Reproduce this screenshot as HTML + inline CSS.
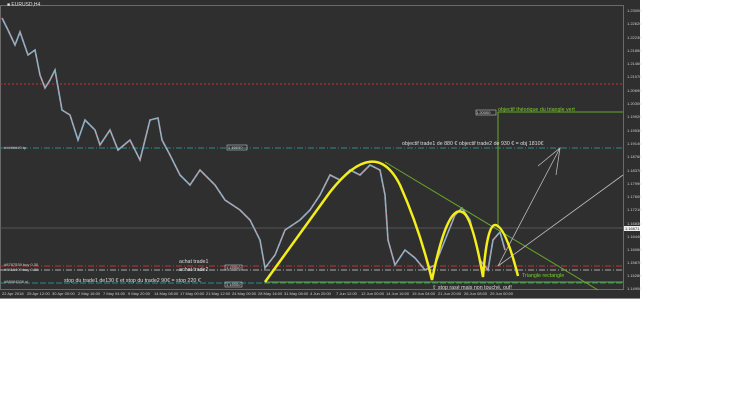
<!DOCTYPE html><html><head><style>body{margin:0;width:749px;height:402px;background:#fff;overflow:hidden;font-family:"Liberation Sans",sans-serif}</style></head><body>
<svg width="749" height="402" style="position:absolute;left:0;top:0" font-family="Liberation Sans, sans-serif">
<rect x="0" y="0" width="640" height="299" fill="#2f2f2f"/>
<rect x="0.5" y="5.5" width="623" height="284" fill="none" stroke="#6a6a6a"/>
<rect x="0" y="298" width="640" height="1" fill="#888"/>
<text x="7" y="6" font-size="5" fill="#ddd">■ EURUSD,H4</text>
<line x1="0" y1="84" x2="623" y2="84" stroke="#c03030" stroke-dasharray="2,2"/>
<line x1="0" y1="148" x2="623" y2="148" stroke="#2a8a8a" stroke-dasharray="6,2,1,2"/>
<text x="4" y="149" font-size="4" fill="#ccc">#######0 tp</text>
<line x1="0" y1="228" x2="623" y2="228" stroke="#555"/>
<line x1="0" y1="266" x2="623" y2="266" stroke="#c03030" stroke-dasharray="6,2,1,2"/>
<line x1="0" y1="270" x2="623" y2="270" stroke="#aaa" stroke-dasharray="6,2,1,2"/>
<line x1="0" y1="283" x2="623" y2="283" stroke="#2a8a8a" stroke-dasharray="6,2"/>
<text x="4" y="266" font-size="4" fill="#ccc">#8787539 buy 0.30</text>
<text x="4" y="271" font-size="4" fill="#ccc">#8819409 buy 0.30</text>
<text x="4" y="283" font-size="4" fill="#ccc">#88984506 sl</text>
<polyline fill="none" stroke="#8fb8d0" stroke-width="1.6" points="2,18 8,30 15,45 20,32 28,55 35,50 40,75 45,88 50,80 55,70 62,110 70,115 78,140 85,120 95,130 100,145 110,130 118,150 130,140 140,160 150,120 158,118 162,140 170,155 180,175 190,185 200,170 215,185 225,200 240,210 250,220 260,240 265,268 275,255 285,230 300,220 310,210 320,195 330,175 340,180 350,170 360,175 370,165 380,170 385,195 388,240 395,265 405,250 415,258 425,270 435,265 445,240 455,215 462,208 470,220 480,260 488,270 493,240 500,232 505,250"/>
<polyline fill="none" stroke="#d08a8a" stroke-width="0.8" stroke-dasharray="3,3" points="2,18 8,30 15,45 20,32 28,55 35,50 40,75 45,88 50,80 55,70 62,110 70,115 78,140 85,120 95,130 100,145 110,130 118,150 130,140 140,160 150,120 158,118 162,140 170,155 180,175 190,185 200,170 215,185 225,200 240,210 250,220 260,240 265,268 275,255 285,230 300,220 310,210 320,195 330,175 340,180 350,170 360,175 370,165 380,170 385,195 388,240 395,265 405,250 415,258 425,270 435,265 445,240 455,215 462,208 470,220 480,260 488,270 493,240 500,232 505,250"/>
<line x1="498" y1="112" x2="623" y2="112" stroke="#6aa82a"/>
<line x1="498" y1="112" x2="498" y2="228" stroke="#6aa82a"/>
<line x1="265" y1="282" x2="623" y2="282" stroke="#6aa82a"/>
<line x1="385" y1="162" x2="598" y2="290" stroke="#6aa82a"/>
<line x1="498" y1="266" x2="560" y2="148" stroke="#bbb" stroke-width="0.8"/>
<polyline points="538,166 560,148 556,175" fill="none" stroke="#bbb" stroke-width="0.8"/>
<line x1="498" y1="266" x2="623" y2="175" stroke="#bbb" stroke-width="0.8"/>
<path d="M265,282 L330,192 Q375,135 400,185 Q420,230 432,280 Q447,205 462,212 Q472,215 483,277 Q487,225 495,225 Q505,225 518,276" fill="none" stroke="#f4ee1a" stroke-width="2.5"/>
<text x="476" y="114" font-size="4" fill="#ddd" style="" >1.20000</text>
<rect x="476" y="110" width="20" height="5" fill="none" stroke="#ddd" stroke-width="0.5"/>
<rect x="227" y="145" width="20" height="5" fill="none" stroke="#ddd" stroke-width="0.5"/>
<text x="228" y="149" font-size="4" fill="#ddd">1.19000</text>
<rect x="225" y="265" width="17" height="5" fill="none" stroke="#ddd" stroke-width="0.5"/>
<text x="226" y="269" font-size="4" fill="#ddd">1.15500</text>
<rect x="225" y="282" width="17" height="5" fill="none" stroke="#ddd" stroke-width="0.5"/>
<text x="226" y="286" font-size="4" fill="#ddd">1.15000</text>
<text x="498" y="111" font-size="5.3" fill="#7ccf2a">objectif théorique du triangle vert</text>
<text x="402" y="145" font-size="5.3" fill="#ddd">objectif trade1 de 880 € objectif trade2 de 930 € = obj 1810€</text>
<text x="522" y="277" font-size="5.3" fill="#7ccf2a">Triangle rectangle</text>
<text x="432" y="289" font-size="5.3" fill="#ddd">⇧ stop rasé mais non touché, ouf!</text>
<text x="179" y="263" font-size="5.3" fill="#ddd">achat trade1</text>
<text x="179" y="271" font-size="5.3" fill="#ddd">achat trade2</text>
<text x="64" y="282" font-size="5.3" fill="#ddd">stop du trade1 de130 € et stop du trade2 90€ = stop 220 €</text>
<g font-size="4" fill="#ccc">
<text x="627" y="12">1.23000</text><text x="627" y="25">1.22620</text><text x="627" y="39">1.22230</text><text x="627" y="52">1.21850</text><text x="627" y="65">1.21460</text><text x="627" y="78">1.21070</text><text x="627" y="92">1.20690</text><text x="627" y="105">1.20300</text><text x="627" y="118">1.19920</text><text x="627" y="132">1.19530</text><text x="627" y="145">1.19140</text><text x="627" y="158">1.18760</text><text x="627" y="172">1.18370</text><text x="627" y="185">1.17990</text><text x="627" y="198">1.17600</text><text x="627" y="211">1.17210</text><text x="627" y="225">1.16830</text><text x="627" y="238">1.16440</text><text x="627" y="251">1.16060</text><text x="627" y="264">1.15670</text><text x="627" y="277">1.15280</text><text x="627" y="290">1.14900</text>
</g>
<rect x="624" y="226" width="16" height="5" fill="#eee"/><text x="625" y="230" font-size="4" fill="#222">1.16671</text>
<g font-size="4" fill="#ccc">
<text x="2" y="295">22 Apr 2018</text><text x="27" y="295">25 Apr 12:00</text><text x="52" y="295">30 Apr 00:00</text><text x="78" y="295">2 May 16:00</text><text x="103" y="295">7 May 04:00</text><text x="128" y="295">9 May 20:00</text><text x="154" y="295">14 May 08:00</text><text x="180" y="295">17 May 00:00</text><text x="206" y="295">21 May 12:00</text><text x="232" y="295">24 May 00:00</text><text x="258" y="295">28 May 16:00</text><text x="284" y="295">31 May 08:00</text><text x="310" y="295">4 Jun 20:00</text><text x="336" y="295">7 Jun 12:00</text><text x="361" y="295">12 Jun 00:00</text><text x="386" y="295">14 Jun 16:00</text><text x="412" y="295">19 Jun 04:00</text><text x="438" y="295">21 Jun 20:00</text><text x="464" y="295">26 Jun 08:00</text><text x="490" y="295">29 Jun 00:00</text>
</g>
</svg></body></html>
